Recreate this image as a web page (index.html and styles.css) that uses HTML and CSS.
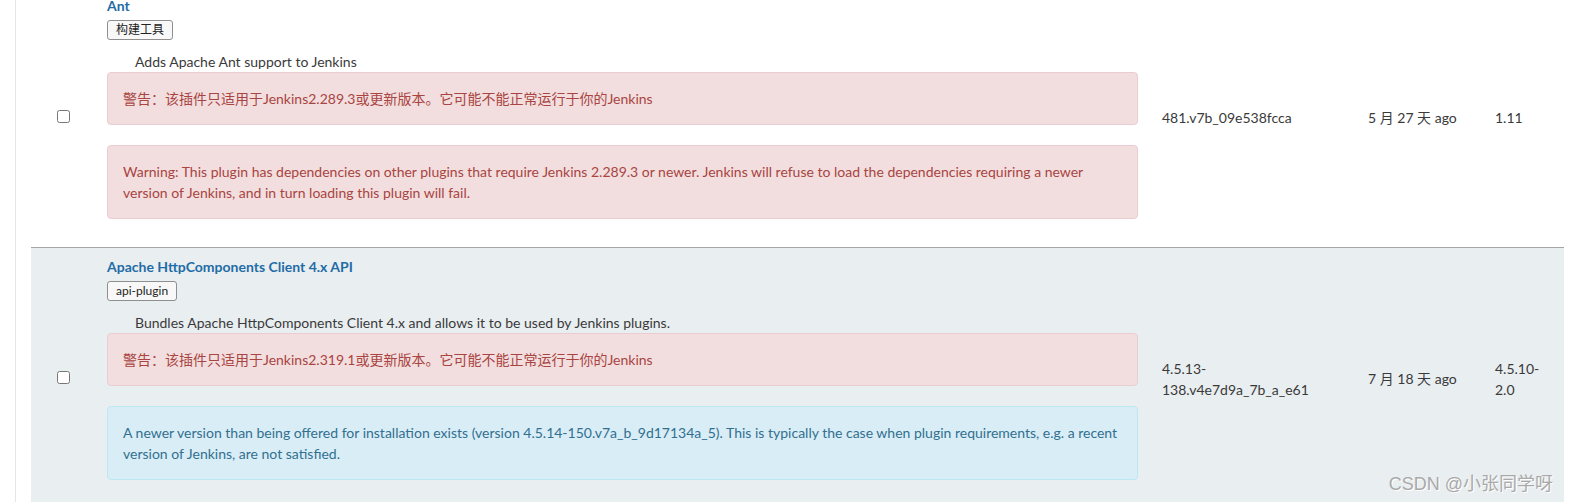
FILE: index.html
```html
<!DOCTYPE html>
<html lang="zh-CN">
<head>
<meta charset="utf-8">
<title>Plugins</title>
<link rel="stylesheet" href="styles.css">
</head>
<body>
<div class="page">
  <table class="plugins">
    <colgroup>
      <col class="c-check">
      <col class="c-name">
      <col class="c-version">
      <col class="c-released">
      <col class="c-installed">
    </colgroup>
    <tbody>
      <tr class="row first">
        <td class="cell-check"><input type="checkbox" class="check"></td>
        <td class="cell-name">
          <a class="title" href="#">Ant</a>
          <div class="tags"><span class="tag">构建工具</span></div>
          <div class="desc">Adds Apache Ant support to Jenkins</div>
          <div class="alert danger">警告：该插件只适用于Jenkins2.289.3或更新版本。它可能不能正常运行于你的Jenkins</div>
          <div class="alert danger">Warning: This plugin has dependencies on other plugins that require Jenkins 2.289.3 or newer. Jenkins will refuse to load the dependencies requiring a newer version of Jenkins, and in turn loading this plugin will fail.</div>
        </td>
        <td class="cell-version">481.v7b_09e538fcca</td>
        <td class="cell-released">5 月 27 天 ago</td>
        <td class="cell-installed">1.11</td>
      </tr>
      <tr class="row alt">
        <td class="cell-check"><input type="checkbox" class="check"></td>
        <td class="cell-name">
          <a class="title" href="#">Apache HttpComponents Client 4.x API</a>
          <div class="tags"><span class="tag">api-plugin</span></div>
          <div class="desc">Bundles Apache HttpComponents Client 4.x and allows it to be used by Jenkins plugins.</div>
          <div class="alert danger">警告：该插件只适用于Jenkins2.319.1或更新版本。它可能不能正常运行于你的Jenkins</div>
          <div class="alert info">A newer version than being offered for installation exists (version 4.5.14-150.v7a_b_9d17134a_5). This is typically the case when plugin requirements, e.g. a recent version of Jenkins, are not satisfied.</div>
        </td>
        <td class="cell-version">4.5.13-138.v4e7d9a_7b_a_e61</td>
        <td class="cell-released">7 月 18 天 ago</td>
        <td class="cell-installed">4.5.10-2.0</td>
      </tr>
    </tbody>
  </table>
</div>
<div class="watermark">CSDN @小张同学呀</div>
</body>
</html>
```

FILE: styles.css
```css
html, body {
  margin: 0;
  padding: 0;
  height: 100%;
  overflow: hidden;
  background: #fff;
}

body {
  font-family: Lato, "Noto Sans CJK SC", sans-serif;
  font-size: 14px;
  line-height: 21px;
  color: #3a3a3a;
}

.page {
  margin-left: 15px;
  border-left: 1px solid #e6e6e6;
  min-height: 100%;
  padding-left: 15px;
}

.plugins {
  width: 1533px;
  margin-top: -13px;
  border-collapse: collapse;
  table-layout: fixed;
}

.c-check { width: 64px; }
.c-name { width: 1055px; }
.c-version { width: 206px; }
.c-released { width: 127px; }
.c-installed { width: 81px; }

.row td {
  vertical-align: middle;
  padding: 9px 12px 8px;
}

.row.alt {
  background: #e9eef1;
  border-top: 1px solid #a2a6a9;
}

.cell-check {
  text-align: center;
}

.check {
  margin: 0;
  width: 13px;
  height: 13px;
}

.cell-version {
  padding-right: 44px !important;
}

.title {
  display: block;
  font-weight: 700;
  line-height: 20px;
  color: #1f6ca6;
  text-decoration: none;
}

.tags {
  margin-top: 4px;
  display: flex;
}

.tag {
  display: inline-block;
  font-size: 12px;
  line-height: 18px;
  padding: 0 8px;
  border: 1px solid #8f8f8f;
  border-radius: 3px;
  background: #f8f8f8;
  color: #222;
}

.desc {
  margin-top: 12px;
  line-height: 20px;
  padding-left: 28px;
}

.alert {
  padding: 15px;
  border: 1px solid transparent;
  border-radius: 4px;
  margin-bottom: 20px;
}

.alert.danger {
  background: #f2dede;
  border-color: #ebccd1;
  color: #a94442;
}

.alert.info {
  background: #d9edf7;
  border-color: #bce8f1;
  color: #31708f;
}

.watermark {
  position: absolute;
  right: 16px;
  bottom: 7px;
  font-family: "Liberation Sans", "Noto Sans CJK SC", sans-serif;
  font-size: 18px;
  color: #a9a9a9;
  text-shadow: 1px 1px 0 #fff;
}
```
